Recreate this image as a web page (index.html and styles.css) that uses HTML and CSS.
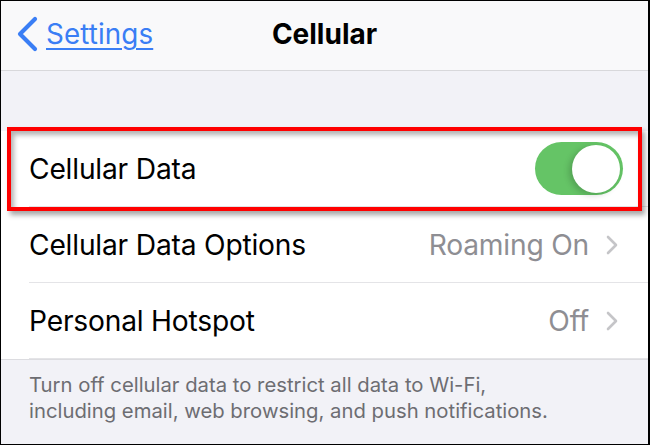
FILE: index.html
```html
<!DOCTYPE html>
<html>
<head>
<meta charset="utf-8">
<link rel="stylesheet" href="styles.css">
</head>
<body>
<div class="frame">
  <header class="nav">
    <a class="back">
      <svg class="back-icon" width="26" height="36" viewBox="0 0 26 36"><path d="M21 3 L6 18 L21 33" fill="none" stroke="#3a7ef5" stroke-width="4.2" stroke-linecap="round" stroke-linejoin="round"/></svg>
      <span class="back-label">Settings</span>
    </a>
    <div class="title">Cellular</div>
  </header>
  <div class="gap"></div>
  <div class="group">
    <div class="row">
      <span class="label">Cellular Data</span>
      <span class="toggle"><span class="knob"></span></span>
    </div>
    <div class="row">
      <span class="label">Cellular Data Options</span>
      <span class="value">Roaming On</span>
      <svg class="chev" width="14" height="22" viewBox="0 0 14 22"><path d="M3 3 L11 11 L3 19" fill="none" stroke="#c5c5c8" stroke-width="2.6" stroke-linecap="round" stroke-linejoin="round"/></svg>
    </div>
    <div class="row">
      <span class="label">Personal Hotspot</span>
      <span class="value">Off</span>
      <svg class="chev" width="14" height="22" viewBox="0 0 14 22"><path d="M3 3 L11 11 L3 19" fill="none" stroke="#c5c5c8" stroke-width="2.6" stroke-linecap="round" stroke-linejoin="round"/></svg>
    </div>
    <div class="highlight"></div>
  </div>
  <p class="footer">Turn off cellular data to restrict all data to Wi-Fi,<br>including email, web browsing, and push notifications.</p>
</div>
</body>
</html>
```
FILE: styles.css
```css
* { box-sizing: border-box; }
html, body { margin: 0; padding: 0; }
body { background: #f2f2f7; font-family: "Inter", "Roboto", "Liberation Sans", sans-serif; }
.frame {
  width: 650px;
  height: 445px;
  border: 1px solid #000;
  border-right-width: 2px;
  background: #f2f2f7;
  overflow: hidden;
  display: flex;
  flex-direction: column;
}
.nav {
  height: 70px;
  flex: none;
  background: #f9f9fa;
  border-bottom: 1px solid #d8d8db;
  position: relative;
  display: flex;
  align-items: center;
  justify-content: center;
}
.back {
  position: absolute;
  left: 13px;
  top: 15px;
  display: flex;
  align-items: center;
  gap: 6px;
  color: #3a7ef5;
}
.back-icon { display: block; }
.back-label {
  font-size: 27.8px;
  text-decoration: underline;
  text-decoration-thickness: 2px;
  text-underline-offset: 4px;
  letter-spacing: 0.1px;
}
.title {
  font-size: 28px;
  font-weight: 700;
  color: #000;
  margin-top: -4px;
}
.gap { height: 60px; flex: none; }
.group {
  background: #fff;
  position: relative;
  border-bottom: 1px solid #dcdce0;
}
.row {
  height: 76px;
  display: flex;
  align-items: center;
  margin-left: 28px;
  padding-right: 25px;
  border-bottom: 1px solid #e4e4e7;
}
.row:last-of-type { border-bottom: none; }
.label {
  font-size: 28.2px;
  color: #000;
  flex: 1;
  letter-spacing: -0.2px;
}
.value {
  font-size: 28.2px;
  color: #8e8e93;
  letter-spacing: -0.2px;
}
.chev { margin-left: 16px; margin-right: 4px; display: block; }
.toggle {
  width: 88px;
  height: 53px;
  border-radius: 27px;
  background: #65c466;
  position: relative;
  flex: none;
}
.knob {
  position: absolute;
  right: 3px;
  top: 2.5px;
  width: 48px;
  height: 48px;
  border-radius: 50%;
  background: #fff;
  box-shadow: -3px 2px 6px rgba(0,0,0,0.18);
}
.highlight {
  position: absolute;
  left: 6px;
  top: -4px;
  width: 635px;
  height: 84px;
  border: 4px solid #ff0000;
  box-shadow: 3px 4px 5px rgba(0,0,0,0.35), inset 3px 4px 5px rgba(0,0,0,0.3);
  pointer-events: none;
}
.footer {
  margin: 0;
  padding: 12px 0 0 28px;
  font-size: 20.3px;
  line-height: 26px;
  color: #6d6d72;
}
```
